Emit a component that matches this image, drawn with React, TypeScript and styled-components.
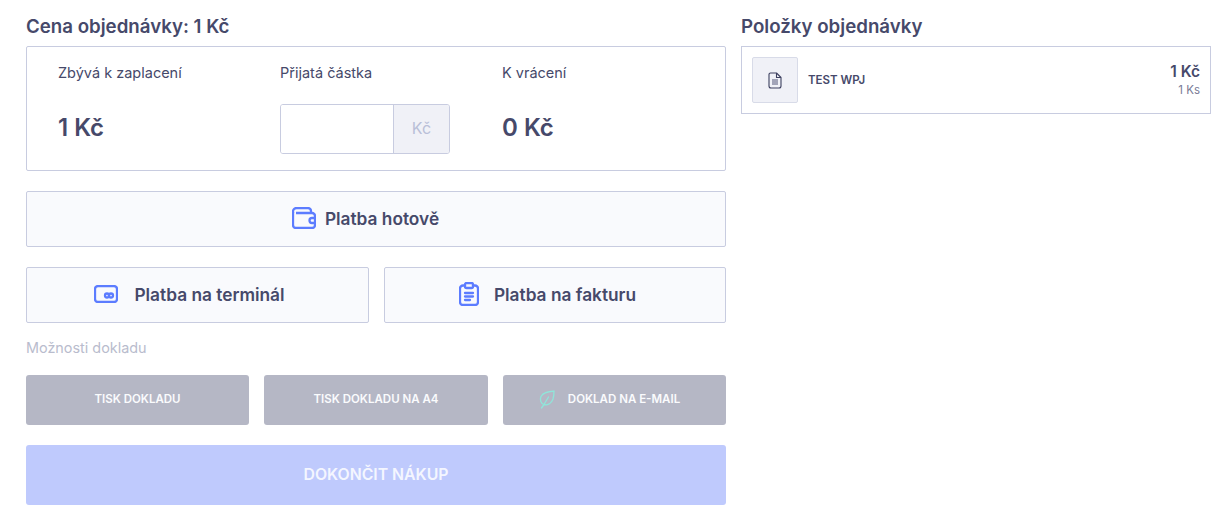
import React from 'react';
import styled, { createGlobalStyle } from 'styled-components';

const TEXT = '#46496a';
const BORDER = '#c8cce0';
const ACCENT = '#5c7cff';
const FONT = '"Inter", "Liberation Sans", sans-serif';

const GlobalStyle = createGlobalStyle`
  html, body {
    margin: 0;
    padding: 0;
    background: #fff;
  }
  body {
    font-family: ${FONT};
    color: ${TEXT};
  }
  * {
    box-sizing: border-box;
  }
`;

const Page = styled.div`
  display: grid;
  grid-template-columns: 700px 470px;
  column-gap: 15px;
  padding: 16px 16px 0 26px;
  width: 1227px;
  height: 514px;
  overflow: hidden;
`;

const Column = styled.div`
  display: flex;
  flex-direction: column;
`;

const Heading = styled.h2`
  margin: 0 0 8px;
  font-size: 18.7px;
  line-height: 22px;
  font-weight: 600;
  color: ${TEXT};
  white-space: nowrap;
`;

const SummaryBox = styled.div`
  display: grid;
  grid-template-columns: repeat(3, 222px);
  height: 125px;
  padding: 16px 0 0 31px;
  border: 1px solid ${BORDER};
  border-radius: 2px;
`;

const SummaryCell = styled.div`
  display: flex;
  flex-direction: column;
  gap: 21px;
`;

const SummaryLabel = styled.div`
  font-size: 14.5px;
  line-height: 20px;
  white-space: nowrap;
`;

const SummaryValue = styled.div`
  height: 50px;
  padding-bottom: 4px;
  display: flex;
  align-items: center;
  font-size: 24px;
  font-weight: 600;
  white-space: nowrap;
`;

const AmountField = styled.div`
  display: flex;
  width: 170px;
  height: 50px;
  border: 1px solid ${BORDER};
  border-radius: 3px;
  overflow: hidden;
`;

const AmountInput = styled.input`
  flex: 1;
  min-width: 0;
  border: 0;
  outline: 0;
  background: #fff;
`;

const AmountUnit = styled.div`
  width: 56px;
  padding-bottom: 2px;
  display: flex;
  align-items: center;
  justify-content: center;
  border-left: 1px solid ${BORDER};
  background: #f0f1f7;
  color: #b9bfd8;
  font-size: 16px;
`;

const PayRow = styled.div`
  display: flex;
  gap: 15px;
  margin-top: 20px;
`;

const PayButton = styled.button<{ $gap: number; $shift: number }>`
  flex: 1;
  height: 56px;
  padding: 0 ${p => p.$shift}px 2px 0;
  display: flex;
  align-items: center;
  justify-content: center;
  gap: ${p => p.$gap}px;
  border: 1px solid ${BORDER};
  border-radius: 2px;
  background: #f9fafd;
  color: ${TEXT};
  font-family: ${FONT};
  font-size: 17.3px;
  font-weight: 600;
  white-space: nowrap;
`;

const OptionsLabel = styled.div`
  margin-top: 16px;
  font-size: 14.4px;
  line-height: 18px;
  color: #b9bccd;
`;

const ReceiptRow = styled.div`
  display: grid;
  grid-template-columns: 223px 224px 223px;
  column-gap: 15px;
  margin-top: 18px;
`;

const ReceiptButton = styled.button<{ $shift?: number }>`
  height: 50px;
  padding: 0 ${p => p.$shift ?? 0}px 2px 0;
  display: flex;
  align-items: center;
  justify-content: center;
  gap: 13px;
  border: 0;
  border-radius: 3px;
  background: #b5b7c5;
  color: #fafbfd;
  font-family: ${FONT};
  font-size: 11.5px;
  font-weight: 600;
  white-space: nowrap;
`;

const FinishButton = styled.button`
  height: 60px;
  margin-top: 20px;
  padding-bottom: 2px;
  border: 0;
  border-radius: 3px;
  background: #bfcafd;
  color: #f4f6ff;
  font-family: ${FONT};
  font-size: 15.8px;
  font-weight: 600;
`;

const ItemCard = styled.div`
  display: flex;
  align-items: center;
  height: 68px;
  padding: 0 10px;
  border: 1px solid ${BORDER};
`;

const ItemThumb = styled.div`
  width: 46px;
  height: 46px;
  display: flex;
  align-items: center;
  justify-content: center;
  background: #f0f1f7;
  border: 1px solid #d8dbe8;
  border-radius: 2px;
`;

const ItemName = styled.div`
  flex: 1;
  margin-left: 10px;
  font-size: 11.5px;
  font-weight: 600;
`;

const ItemPrices = styled.div`
  display: flex;
  flex-direction: column;
  align-items: flex-end;
`;

const ItemPrice = styled.div`
  font-size: 15.5px;
  line-height: 20px;
  font-weight: 600;
`;

const ItemQty = styled.div`
  font-size: 11.5px;
  line-height: 16px;
  color: #777a95;
`;

const WalletIcon = () => (
  <svg width="24" height="22" viewBox="0 0 24 22" fill="none" stroke={ACCENT} strokeWidth="2.3" strokeLinejoin="round">
    <path d="M1 6V4.500A3.500 3.500 0 0 1 4.500 1H16a3 3 0 0 1 3 3v2" />
    <path d="M1 5v13a3 3 0 0 0 3 3h16a3 3 0 0 0 3-3V9a3 3 0 0 0-3-3H4" />
    <path d="M23 11h-3a2.500 2.500 0 0 0 0 5h3" />
  </svg>
);

const TerminalIcon = () => (
  <svg width="24" height="18" viewBox="0 0 24 18" fill="none" stroke={ACCENT} strokeWidth="2.3">
    <rect x="1" y="1" width="22" height="16" rx="3" />
    <circle cx="13" cy="10.500" r="2" />
    <circle cx="17" cy="10.500" r="2" />
  </svg>
);

const ClipboardIcon = () => (
  <svg width="20" height="24" viewBox="0 0 20 24" fill="none" stroke={ACCENT} strokeWidth="2.3" strokeLinecap="round" strokeLinejoin="round">
    <path d="M6 3.500H4a3 3 0 0 0-3 3V20a3 3 0 0 0 3 3h12a3 3 0 0 0 3-3V6.500a3 3 0 0 0-3-3h-2" />
    <rect x="6" y="1" width="8" height="5" rx="1.500" />
    <path d="M6 11h8M6 14.500h8M6 18h5" />
  </svg>
);

const LeafIcon = () => (
  <svg width="16" height="19" viewBox="0 0 16 19" fill="none" stroke="#8fe6da" strokeWidth="1.3" strokeLinecap="round" strokeLinejoin="round">
    <path d="M15 1C10 1.500 4 2 2 6.500 .5 10 2 13.500 5 14.500 9 15.500 12.500 13 14 9 15 6 15 3.500 15 1Z" />
    <path d="M2.500 18 5 14.500 9.500 7" />
  </svg>
);

const DocumentIcon = () => (
  <svg width="14" height="17" viewBox="0 0 14 17" fill="none" stroke="#3d4060" strokeWidth="1.1" strokeLinejoin="round">
    <path d="M2.500 1H8.500L13 5.500V14a2 2 0 0 1-2 2H3a2 2 0 0 1-2-2V2.500A1.500 1.500 0 0 1 2.500 1Z" />
    <path d="M8.500 1v4.500H13" />
    <path d="M4 8h6M4 10h6M4 12h6" stroke="#55587a" />
  </svg>
);

const App: React.FC = () => (
  <Page>
    <GlobalStyle />
    <Column>
      <Heading>Cena objednávky: 1 Kč</Heading>
      <SummaryBox>
        <SummaryCell>
          <SummaryLabel>Zbývá k zaplacení</SummaryLabel>
          <SummaryValue>1 Kč</SummaryValue>
        </SummaryCell>
        <SummaryCell>
          <SummaryLabel>Přijatá částka</SummaryLabel>
          <AmountField>
            <AmountInput />
            <AmountUnit>Kč</AmountUnit>
          </AmountField>
        </SummaryCell>
        <SummaryCell>
          <SummaryLabel>K vrácení</SummaryLabel>
          <SummaryValue>0 Kč</SummaryValue>
        </SummaryCell>
      </SummaryBox>
      <PayRow>
        <PayButton $gap={9} $shift={21}>
          <WalletIcon />
          Platba hotově
        </PayButton>
      </PayRow>
      <PayRow>
        <PayButton $gap={16} $shift={16}>
          <TerminalIcon />
          Platba na terminál
        </PayButton>
        <PayButton $gap={15} $shift={15}>
          <ClipboardIcon />
          Platba na fakturu
        </PayButton>
      </PayRow>
      <OptionsLabel>Možnosti dokladu</OptionsLabel>
      <ReceiptRow>
        <ReceiptButton>TISK DOKLADU</ReceiptButton>
        <ReceiptButton>TISK DOKLADU NA A4</ReceiptButton>
        <ReceiptButton $shift={10}>
          <LeafIcon />
          DOKLAD NA E-MAIL
        </ReceiptButton>
      </ReceiptRow>
      <FinishButton>DOKONČIT NÁKUP</FinishButton>
    </Column>
    <Column>
      <Heading>Položky objednávky</Heading>
      <ItemCard>
        <ItemThumb>
          <DocumentIcon />
        </ItemThumb>
        <ItemName>TEST WPJ</ItemName>
        <ItemPrices>
          <ItemPrice>1 Kč</ItemPrice>
          <ItemQty>1 Ks</ItemQty>
        </ItemPrices>
      </ItemCard>
    </Column>
  </Page>
);

export default App;
